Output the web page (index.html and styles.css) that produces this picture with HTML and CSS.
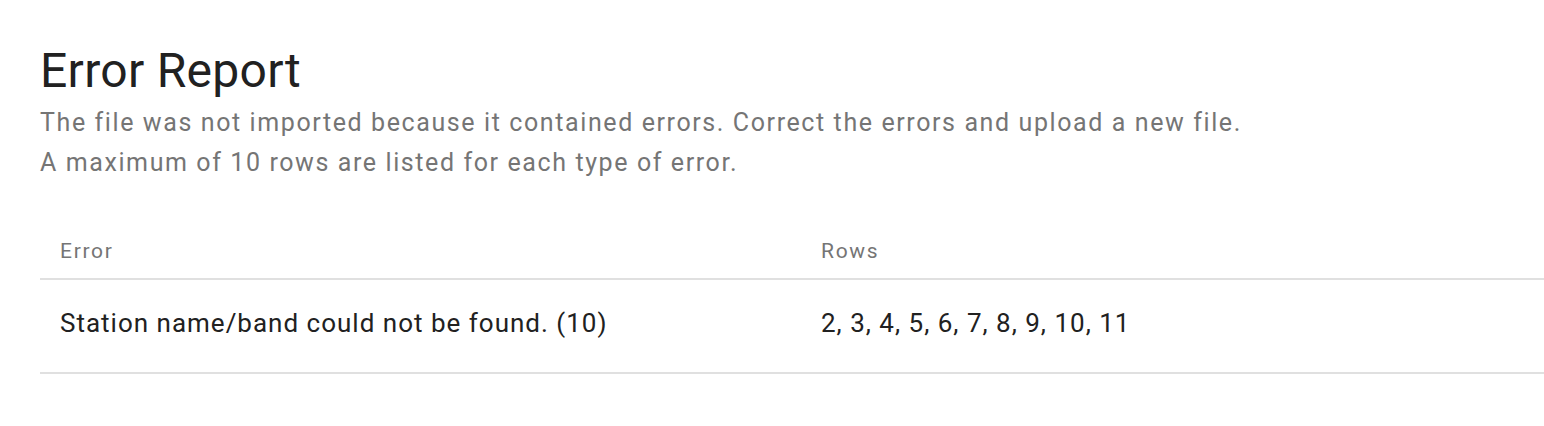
FILE: index.html
```html
<!DOCTYPE html>
<html lang="en">
<head>
  <meta charset="UTF-8" />
  <meta name="viewport" content="width=device-width, initial-scale=1.0"/>
  <title>Error Report</title>
  <link rel="stylesheet" href="styles.css">
</head>
<body>
  <div class="report">
    <h1>Error Report</h1>
    <p class="intro">
      The file was not imported because it contained errors. Correct the errors and upload a new file.<br>
      A maximum of 10 rows are listed for each type of error.
    </p>

    <table class="errors">
      <thead>
        <tr>
          <th class="col-error">Error</th>
          <th>Rows</th>
        </tr>
      </thead>
      <tbody>
        <tr>
          <td>Station name/band could not be found. (10)</td>
          <td>2, 3, 4, 5, 6, 7, 8, 9, 10, 11</td>
        </tr>
      </tbody>
    </table>
  </div>
</body>
</html>
```

FILE: styles.css
```css
body { margin: 0; font-family: Roboto, "Liberation Sans", Arial, sans-serif; color: #212121; background: #fff; }
.report { padding: 43px 0 0 40px; }
h1 { font-size: 48px; font-weight: 400; line-height: 56px; letter-spacing: 0.3px; margin: 0; }
.intro { font-size: 25px; line-height: 40px; letter-spacing: 1.6px; color: #757575; margin: 4px 0 56px 0; }
.errors { width: 100%; border-collapse: collapse; }
.errors th { text-align: left; font-weight: 400; font-size: 21px; line-height: 24px; letter-spacing: 1.7px; color: #757575; padding: 0 20px 15px 20px; border-bottom: 2px solid #e0e0e0; }
.errors td { font-size: 26px; line-height: 32px; letter-spacing: 1px; padding: 27px 20px 33px 20px; border-bottom: 2px solid #e0e0e0; }
.col-error { width: 721px; }
```
